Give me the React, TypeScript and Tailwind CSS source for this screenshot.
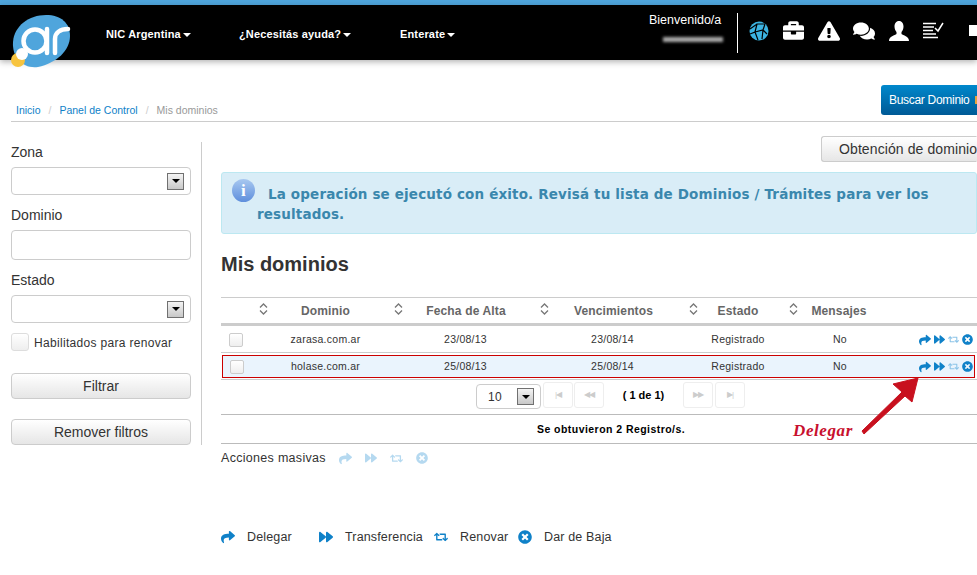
import { FaBriefcase, FaExclamationTriangle, FaComments, FaShare, FaForward, FaRetweet, FaTimesCircle } from "react-icons/fa";

const rows = [
  { name: "zarasa.com.ar", alta: "23/08/13", venc: "23/08/14" },
  { name: "holase.com.ar", alta: "25/08/13", venc: "25/08/14" },
];

function Logo() {
  return (
    <svg width="60" height="54" viewBox="0 0 60 54" className="shrink-0">
      <path d="M2 27C3 11 18 0 35 0C50 0 59 8 59 21C59 36 45 48 27 52C12 54 1 43 2 27Z" fill="#4fa5dc" />
      <circle cx="7" cy="45" r="7" fill="#f7c43f" />
      <circle cx="11" cy="39" r="6" fill="#ffffff" />
      <circle cx="24" cy="26" r="11.500" fill="none" stroke="#ffffff" strokeWidth="4.500" />
      <line x1="36" y1="14" x2="36" y2="38" stroke="#ffffff" strokeWidth="4.500" strokeLinecap="round" />
      <path d="M44 38V24C44 18 49 14 57 14" fill="none" stroke="#ffffff" strokeWidth="4.500" strokeLinecap="round" />
    </svg>
  );
}

function NavItem({ label, className }: { label: string; className: string }) {
  return (
    <div className={`mt-[4px] flex shrink-0 items-center gap-[2px] text-[11px] font-bold text-white tracking-[0.15px] ${className}`}>
      {label}
      <span className="border-x-[4px] border-t-[4px] border-x-transparent border-t-white" />
    </div>
  );
}

function SelectArrow() {
  return (
    <div className="flex h-[17px] w-[17px] items-center justify-center border border-[#707070] bg-gradient-to-b from-[#f4f4f4] to-[#c8c8c8]">
      <span className="border-x-[4px] border-t-[4px] border-x-transparent border-t-black" />
    </div>
  );
}

function SelectBox({ className = "" }: { className?: string }) {
  return (
    <div className={`flex h-[28px] items-center justify-end rounded-[4px] border border-[#ccc] bg-white pr-[6px] ${className}`}>
      <SelectArrow />
    </div>
  );
}

function FilterButton({ label, className = "" }: { label: string; className?: string }) {
  return (
    <button className={`h-[26px] w-[180px] rounded-[4px] border border-[#ccc] bg-gradient-to-b from-white to-[#e6e6e6] text-[14px] text-[#333] ${className}`}>
      {label}
    </button>
  );
}

function HeadCell({ label }: { label: string }) {
  return (
    <div className="relative flex items-center justify-center">
      <svg width="9" height="12" viewBox="0 0 9 12" className="absolute left-[1px] top-[5px]" fill="none" stroke="#777" strokeWidth="1.3">
        <path d="M1 4.500L4.500 1L8 4.500" />
        <path d="M1 7.500L4.500 11L8 7.500" />
      </svg>
      {label}
    </div>
  );
}

function RowActions({ className }: { className: string }) {
  return (
    <div className={`flex items-center justify-end gap-[3px] text-[#0f81c8] ${className}`}>
      <FaShare className="text-[12px]" />
      <FaForward className="text-[11px]" />
      <FaRetweet className="text-[11px] text-[#8cc4e8]" />
      <FaTimesCircle className="text-[11px]" />
    </div>
  );
}

function RowCells({ row }: { row: { name: string; alta: string; venc: string } }) {
  return (
    <>
      <div className="text-center">{row.name}</div>
      <div className="pr-[1px] text-center">{row.alta}</div>
      <div className="pr-[2px] text-center">{row.venc}</div>
      <div className="text-center">Registrado</div>
      <div className="pl-[2px] text-center">No</div>
    </>
  );
}

function RowCheck({ className }: { className: string }) {
  return (
    <div className={className}>
      <div className="h-[14px] w-[14px] rounded-[2px] border border-[#ccc] bg-gradient-to-b from-white to-[#eee]" />
    </div>
  );
}

function PageButton({ children }: { children: string }) {
  return (
    <div className="flex h-[26px] w-[30px] items-center justify-center rounded-[3px] border border-[#eee] text-[8px] tracking-[-1px] text-[#ccc]">
      {children}
    </div>
  );
}

function LegendItem({ icon, label, className }: { icon: React.ReactNode; label: string; className: string }) {
  return (
    <div className={`flex items-center ${className}`}>
      <span className="w-[26px] shrink-0 text-[14px] text-[#0f81c8]">{icon}</span>
      <span>{label}</span>
    </div>
  );
}

export default function App() {
  return (
    <div className="relative h-[575px] w-[977px] overflow-hidden bg-white font-['Liberation_Sans',Arial,sans-serif] text-[#333]">
      <div className="h-[5px] bg-[#4fa5dc]" />

      {/* header */}
      <div className="relative z-10 flex h-[55px] items-center bg-black pl-[11px] shadow-[0_2px_6px_rgba(0,0,0,0.3)]">
        <div className="mt-[10px] shrink-0 self-start">
          <Logo />
        </div>
        <NavItem label="NIC Argentina" className="ml-[35px] w-[133px]" />
        <NavItem label="¿Necesitás ayuda?" className="w-[161px]" />
        <NavItem label="Enterate" className="w-[249px]" />
        <div className="w-[88px] shrink-0 self-start pt-[7px] text-[12.5px] leading-[16px] text-white">
          Bienvenido/a
          <div className="ml-[14px] mt-[9px] h-[5px] w-[60px] bg-[#aaa] blur-[1.5px]" />
        </div>
        <div className="h-[40px] w-px shrink-0 bg-white" />
        <div className="mb-[4px] ml-[3px] flex shrink-0 items-center text-white">
          <div className="flex w-[35px] justify-center">
            <svg width="20" height="20" viewBox="0 0 20 20">
              <circle cx="10" cy="10" r="9.500" fill="#3cb4e2" />
              <path d="M1 8L8 3L16 3M8 3L6 11L1 13M6 11L14 9L18 13M14 9L16 3M6 11L9 19M14 9L13 18" fill="none" stroke="#000" strokeWidth="1.2" />
            </svg>
          </div>
          <div className="flex w-[35px] justify-center">
            <FaBriefcase className="text-[21px]" />
          </div>
          <div className="flex w-[35px] justify-center">
            <FaExclamationTriangle className="text-[22px]" />
          </div>
          <div className="flex w-[35px] justify-center">
            <FaComments className="text-[22px]" />
          </div>
          <div className="flex w-[35px] justify-center">
            <svg width="20" height="20" viewBox="0 0 20 20" fill="#fff">
              <path d="M10 0C13 0 14.500 2.500 14.500 5.500C14.500 8 13.500 10 12.500 11V13C14 14.500 20 15 20 20H0C0 15 6 14.500 7.500 13V11C6.500 10 5.500 8 5.500 5.500C5.500 2.500 7 0 10 0Z" />
            </svg>
          </div>
          <div className="flex w-[35px] justify-center">
            <svg width="21" height="17" viewBox="0 0 21 17" fill="none" stroke="#fff" strokeWidth="1.5">
              <path d="M0 1.500H13M0 5H11M0 8.500H10M0 12H13M0 15.500H15" />
              <path d="M12 6L15 9L20 1" />
            </svg>
          </div>
          <div className="ml-[18px] h-[11px] w-[10px] shrink-0 bg-white" />
        </div>
      </div>

      {/* breadcrumb */}
      <div className="ml-[11px] flex h-[62px] items-start justify-between border-b border-[#ccc] pt-[25px]">
        <div className="mt-[18px] flex gap-[8px] pl-[5px] text-[10.5px] text-[#999]">
          <span className="text-[#0f81c8]">Inicio</span>
          <span className="text-[#ccc]">/</span>
          <span className="text-[#0f81c8]">Panel de Control</span>
          <span className="text-[#ccc]">/</span>
          <span>Mis dominios</span>
        </div>
        <div className="flex h-[30px] w-[96px] shrink-0 items-center gap-[5px] rounded-l-[3px] bg-gradient-to-b from-[#0088cc] to-[#005a96] pl-[8px] text-[12px] tracking-[-0.3px] whitespace-nowrap text-white">
          Buscar Dominio
          <span className="h-[8px] w-[2px] shrink-0 bg-[#e8a33d]" />
        </div>
      </div>

      <div className="flex">
        {/* filters */}
        <div className="ml-[11px] mt-[20px] h-[303px] w-[191px] shrink-0 border-r border-[#ccc] pr-[10px] text-[14px]">
          <div className="leading-[20px]">Zona</div>
          <SelectBox className="mt-[5px]" />
          <div className="mt-[10px] leading-[20px]">Dominio</div>
          <div className="mt-[5px] h-[30px] rounded-[4px] border border-[#ccc]" />
          <div className="mt-[10px] leading-[20px]">Estado</div>
          <SelectBox className="mt-[5px]" />
          <div className="mt-[10px] flex h-[18px] items-center text-[12px] tracking-[0.32px]">
            <div className="mr-[5px] h-[18px] w-[18px] rounded-[3px] border border-[#ddd] bg-gradient-to-b from-white to-[#eee]" />
            <span className="pt-[2px]">Habilitados para renovar</span>
          </div>
          <FilterButton label="Filtrar" className="mt-[22px] block" />
          <FilterButton label="Remover filtros" className="mt-[20px] block" />
        </div>

        {/* main */}
        <div className="ml-[19px] w-[756px] shrink-0">
          <div className="mt-[14px] flex justify-end">
            <div className="flex h-[26px] w-[156px] items-center rounded-l-[3px] border border-y-[#ccc] border-l-[#ccc] border-r-transparent bg-gradient-to-b from-white to-[#e6e6e6] pl-[17px] text-[14px] tracking-[0.1px] whitespace-nowrap text-[#333]">
              Obtención de dominio
            </div>
          </div>

          <div className="relative mt-[10px] h-[62px] rounded-[3px] border border-[#bce8f1] bg-[#d9edf7] pl-[35px] pt-[11px] font-['DejaVu_Sans',sans-serif] text-[13.5px] leading-[20px] font-bold tracking-[0.15px] text-[#3a87ad]">
            <div className="absolute left-[10px] top-[6px] flex h-[23px] w-[23px] items-center justify-center rounded-full bg-gradient-to-b from-[#a8c8f0] to-[#5f8fdc] font-['Liberation_Serif',serif] text-[17px] text-white">
              i
            </div>
            <div className="pl-[11px] whitespace-nowrap">La operación se ejecutó con éxito. Revisá tu lista de Dominios / Trámites para ver los</div>
            <div>resultados.</div>
          </div>

          <h1 className="mt-[18px] text-[20px] leading-[24px] font-bold text-[#333]">Mis dominios</h1>

          {/* table */}
          <div className="mt-[21px] text-[10.5px] tracking-[0.25px]">
            <div className="grid h-[29px] grid-cols-[37px_135px_146px_149px_100px_102px_87px] border-t border-b-[3px] border-[#ccc] text-[12px] font-bold tracking-[0.15px] text-[#666]">
              <div />
              <HeadCell label="Dominio" />
              <HeadCell label="Fecha de Alta" />
              <HeadCell label="Vencimientos" />
              <HeadCell label="Estado" />
              <HeadCell label="Mensajes" />
              <div />
            </div>
            <div className="grid h-[27px] grid-cols-[37px_135px_146px_149px_100px_102px_87px] items-center border-b border-[#ccc] pt-[1px]">
              <RowCheck className="pl-[8px]" />
              <RowCells row={rows[0]} />
              <RowActions className="pr-[4px]" />
            </div>
            <div className="border-b border-[#ccc] pb-[1px] pt-[2px]">
              <div className="ml-[1px] grid h-[23px] w-[753px] grid-cols-[35px_135px_146px_149px_100px_102px_84px] items-center border border-[#c00] bg-[#eaf4fd]">
                <RowCheck className="pl-[7px]" />
                <RowCells row={rows[1]} />
                <RowActions className="pr-[1px]" />
              </div>
            </div>

            {/* pagination */}
            <div className="flex h-[35px] items-start border-b border-[#bbb] pl-[255px] pt-[2px]">
              <div className="mt-[2px] flex h-[25px] w-[65px] items-center justify-between rounded-[4px] border border-[#ccc] pl-[11px] pr-[6px] text-[12px]">
                10
                <SelectArrow />
              </div>
              <div className="ml-[2px] flex gap-[1px]">
                <PageButton>|◀</PageButton>
                <PageButton>◀◀</PageButton>
              </div>
              <div className="w-[79px] pt-[5px] text-center text-[11px] font-bold tracking-normal text-black">( 1 de 1)</div>
              <div className="flex gap-[2px]">
                <PageButton>▶▶</PageButton>
                <PageButton>▶|</PageButton>
              </div>
            </div>

            <div className="h-[29px] border-b border-[#bbb] pl-[316px] pt-[7px] text-[10.5px] font-bold tracking-[0.45px] text-black">
              Se obtuvieron 2 Registro/s.
            </div>
          </div>

          <div className="mt-[5px] flex items-center text-[12.5px] tracking-[0.3px]">
            Acciones masivas
            <div className="ml-[13px] flex items-center gap-[13px] text-[13px] text-[#b5d9f0]">
              <FaShare />
              <FaForward className="text-[12px]" />
              <FaRetweet />
              <FaTimesCircle className="text-[12px]" />
            </div>
          </div>

          <div className="mt-[60px] flex items-center text-[12.5px] tracking-[0.15px]">
            <LegendItem icon={<FaShare />} label="Delegar" className="w-[98px]" />
            <LegendItem icon={<FaForward />} label="Transferencia" className="w-[115px]" />
            <LegendItem icon={<FaRetweet />} label="Renovar" className="w-[84px]" />
            <LegendItem icon={<FaTimesCircle />} label="Dar de Baja" className="w-[100px]" />
          </div>
        </div>
      </div>

      {/* annotation over the table */}
      <div className="absolute left-[793px] top-[418px] font-['Liberation_Serif',serif] text-[17px] font-semibold italic tracking-[0.6px] text-[#c8102e]">
        Delegar
      </div>
      <svg width="70" height="70" viewBox="0 0 70 70" className="absolute left-[855px] top-[372px]">
        <path d="M63 6L38 12L47 20L7 59L9 62L50 24L57 30Z" fill="#c8101e" stroke="#c8101e" strokeLinejoin="round" />
      </svg>
    </div>
  );
}
